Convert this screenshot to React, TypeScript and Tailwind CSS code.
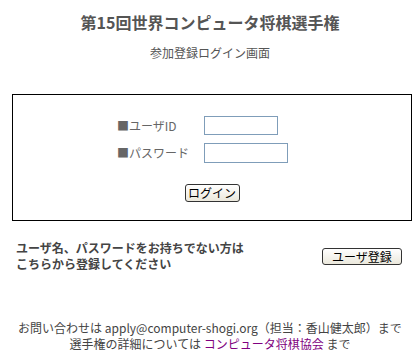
export default function App() {
  const font = { fontFamily: '"Noto Sans CJK JP", "Liberation Sans", sans-serif' };
  return (
    <div className="w-[420px] h-[360px] bg-white text-[#444]" style={font}>
      <h1 className="pt-[12px] text-center text-[16px] leading-[20px] font-bold text-[#555]">
        第15回世界コンピュータ将棋選手権
      </h1>
      <p className="mt-[13px] text-center text-[12px] leading-[16px] text-[#555]">参加登録ログイン画面</p>

      <div className="mt-[33px] ml-[12px] w-[400px] h-[127px] border border-black flex flex-col">
        <div className="mt-[21px] h-[19px] flex items-center pl-[104px]">
          <span className="w-[87px] text-[12px] text-[#666]">■ユーザID</span>
          <input className="w-[74px] h-[19px] border border-[#7f9db9] bg-white" />
        </div>
        <div className="mt-[8px] h-[20px] flex items-center pl-[104px]">
          <span className="w-[87px] text-[12px] text-[#666]">■パスワード</span>
          <input type="password" className="w-[84px] h-[20px] border border-[#7f9db9] bg-white" />
        </div>
        <div className="mt-[21px] flex justify-center">
          <button className="w-[55px] h-[18px] rounded-[3px] border border-[#333] bg-gradient-to-b from-white to-[#ebe8dc] text-[12px] leading-[16px] text-black">
            ログイン
          </button>
        </div>
      </div>

      <div className="mt-[19px] flex items-center justify-between pl-[16px] pr-[18px]">
        <p className="text-[12px] leading-[16px] font-bold text-[#444]">
          ユーザ名、パスワードをお持ちでない方は
          <br />
          こちらから登録してください
        </p>
        <button className="w-[80px] h-[17px] rounded-[3px] border border-[#333] bg-gradient-to-b from-white to-[#ebe8dc] text-[12px] leading-[15px] text-black">
          ユーザ登録
        </button>
      </div>

      <div className="mt-[48px] text-center text-[12px] leading-[16px] text-[#444]">
        <p>お問い合わせは apply@computer-shogi.org（担当：香山健太郎）まで</p>
        <p>
          選手権の詳細については <a className="text-[#800080]" href="#">コンピュータ将棋協会</a> まで
        </p>
      </div>
    </div>
  );
}
